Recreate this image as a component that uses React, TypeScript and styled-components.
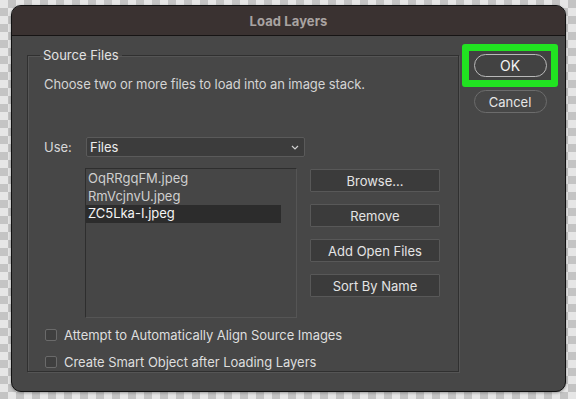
import React, { useState } from 'react';
import styled, { createGlobalStyle } from 'styled-components';

const GlobalStyle = createGlobalStyle`
  html, body {
    margin: 0;
    padding: 0;
  }
  body {
    width: 576px;
    height: 399px;
    overflow: hidden;
    font-family: Inter, "Liberation Sans", sans-serif;
    background: repeating-conic-gradient(#c4c4c4 0 25%, #e6e6e6 0 50%) 0 0 / 16px 16px;
  }
`;

const Stage = styled.div`
  padding: 5px 10px 0 11px;
`;

const Window = styled.div`
  width: 553px;
  height: 385px;
  background: #474747;
  border: 1px solid #111;
  border-radius: 10px;
  overflow: hidden;
  box-shadow: 0 1px 3px rgba(0, 0, 0, 0.35);
`;

const TitleBar = styled.div`
  height: 29px;
  background: #3a3231;
  border-bottom: 1px solid #161414;
  display: flex;
  align-items: center;
  justify-content: center;
  color: #a9a3a1;
  font-size: 13px;
  font-weight: 700;
  letter-spacing: 0.1px;
`;

const Body = styled.div`
  display: flex;
  align-items: flex-start;
  padding: 8px 0 0 15px;
`;

const Group = styled.fieldset`
  margin: 3px 0 0;
  padding: 0 0 8px 16px;
  width: 414px;
  height: 315px;
  border: 1px solid #303030;
  box-shadow: 1px 1px 0 #555, inset 1px 1px 0 #555;
  min-width: 0;
  display: flex;
  flex-direction: column;
`;

const Legend = styled.legend`
  margin-left: -4px;
  padding: 0 3px;
  color: #e2e2e2;
  font-size: 13px;
  line-height: 16px;
`;

const Description = styled.p`
  margin: 13px 0 0;
  color: #d4d4d4;
  font-size: 13px;
  line-height: 16px;
  letter-spacing: -0.1px;
`;

const UseRow = styled.div`
  display: flex;
  align-items: center;
  margin-top: 45px;
`;

const FieldLabel = styled.span`
  width: 42px;
  color: #d8d8d8;
  font-size: 13px;
`;

const Select = styled.div`
  width: 209px;
  height: 18px;
  background: #3c3c3c;
  border: 1px solid #5a5a5a;
  border-radius: 2px;
  display: flex;
  align-items: center;
  justify-content: space-between;
  padding: 0 5px 0 3px;
  color: #ececec;
  font-size: 13px;
`;

const FilesRow = styled.div`
  display: flex;
  margin-top: 11px;
`;

const FileList = styled.div`
  width: 212px;
  height: 150px;
  margin-left: 41px;
  background: #464646;
  border: 1px solid #2e2e2e;
  border-right-color: #555;
  border-bottom-color: #555;
  padding: 1px 15px 0 0;
  box-sizing: border-box;
`;

const FileItem = styled.div<{ $selected?: boolean }>`
  height: 17.5px;
  line-height: 17.5px;
  padding-left: 2px;
  font-size: 13px;
  color: ${({ $selected }) => ($selected ? '#f4f4f4' : '#cfcfcf')};
  background: ${({ $selected }) => ($selected ? '#2c2c2c' : 'transparent')};
`;

const ButtonStack = styled.div`
  display: flex;
  flex-direction: column;
  gap: 12px;
  margin-left: 13px;
  margin-top: 1px;
`;

const SideButton = styled.button`
  width: 130px;
  height: 23px;
  background: #3b3b3b;
  border: 1px solid #585858;
  border-radius: 1px;
  color: #e4e4e4;
  font-family: inherit;
  font-size: 13px;
  padding: 0;
`;

const Checks = styled.div`
  display: flex;
  flex-direction: column;
  gap: 15px;
  margin-top: 11px;
`;

const CheckRow = styled.label`
  display: flex;
  align-items: center;
  gap: 7px;
  margin-left: 1px;
  color: #dedede;
  font-size: 13px;
  line-height: 12px;
  letter-spacing: -0.05px;
`;

const Box = styled.span`
  width: 10px;
  height: 10px;
  border: 1px solid #6a6a6a;
  border-radius: 2px;
  background: #3f3f3f;
`;

const Actions = styled.div`
  display: flex;
  flex-direction: column;
  align-items: center;
  margin: 0 0 0 3px;
  width: 96px;
`;

const Highlight = styled.div`
  width: 82px;
  height: 29px;
  border: 7px solid #21e321;
  border-radius: 3px;
  display: flex;
  align-items: center;
  justify-content: center;
  background: #424242;
`;

const Pill = styled.button<{ $primary?: boolean }>`
  width: 73px;
  height: 23px;
  border-radius: 12px;
  background: transparent;
  border: 1.5px solid ${({ $primary }) => ($primary ? '#b9b9b9' : '#6c6c6c')};
  color: ${({ $primary }) => ($primary ? '#f2f2f2' : '#e6e6e6')};
  font-family: inherit;
  font-size: ${({ $primary }) => ($primary ? '14px' : '13px')};
  padding: 0;
`;

const CancelPill = styled(Pill)`
  margin-top: 3px;
`;

const Chevron = () => (
  <svg width="8" height="5" viewBox="0 0 8 5">
    <path d="M1 1 L4 4 L7 1" fill="none" stroke="#cfcfcf" strokeWidth="1.2" />
  </svg>
);

const files = ['OqRRgqFM.jpeg', 'RmVcjnvU.jpeg', 'ZC5Lka-I.jpeg'];

const App: React.FC = () => {
  const [selected] = useState(2);

  return (
    <>
      <GlobalStyle />
      <Stage>
        <Window>
          <TitleBar>Load Layers</TitleBar>
          <Body>
            <Group>
              <Legend>Source Files</Legend>
              <Description>Choose two or more files to load into an image stack.</Description>
              <UseRow>
                <FieldLabel>Use:</FieldLabel>
                <Select>
                  <span>Files</span>
                  <Chevron />
                </Select>
              </UseRow>
              <FilesRow>
                <FileList>
                  {files.map((f, i) => (
                    <FileItem key={f} $selected={i === selected}>{f}</FileItem>
                  ))}
                </FileList>
                <ButtonStack>
                  <SideButton>Browse...</SideButton>
                  <SideButton>Remove</SideButton>
                  <SideButton>Add Open Files</SideButton>
                  <SideButton>Sort By Name</SideButton>
                </ButtonStack>
              </FilesRow>
              <Checks>
                <CheckRow><Box />Attempt to Automatically Align Source Images</CheckRow>
                <CheckRow><Box />Create Smart Object after Loading Layers</CheckRow>
              </Checks>
            </Group>
            <Actions>
              <Highlight>
                <Pill $primary>OK</Pill>
              </Highlight>
              <CancelPill>Cancel</CancelPill>
            </Actions>
          </Body>
        </Window>
      </Stage>
    </>
  );
};

export default App;
